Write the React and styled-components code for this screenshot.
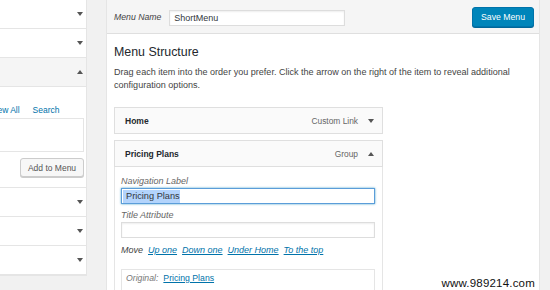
import React from 'react';
import styled, { createGlobalStyle } from 'styled-components';

const GlobalStyle = createGlobalStyle`
    body {
        margin: 0;
        background: #f1f1f1;
        font-family: "Liberation Sans", Arial, sans-serif;
        color: #444;
    }
`

const Arrow = ({ up }) => <Tri $up={up} />

const App = () => {
    return (
        <Page>
            <GlobalStyle />
            <Sidebar>
                <AccRow><Arrow /></AccRow>
                <AccRow><Arrow /></AccRow>
                <AccRow $open><Arrow up /></AccRow>
                <AccBody>
                    <Tabs>
                        <TabLink>View All</TabLink>
                        <TabLink>Search</TabLink>
                    </Tabs>
                    <ListBox />
                    <ButtonRow>
                        <AddButton>Add to Menu</AddButton>
                    </ButtonRow>
                </AccBody>
                <AccRow><Arrow /></AccRow>
                <AccRow><Arrow /></AccRow>
                <AccRow><Arrow /></AccRow>
            </Sidebar>

            <Editor>
                <EditorHeader>
                    <NameLabel>Menu Name</NameLabel>
                    <NameInput>ShortMenu</NameInput>
                    <SaveButton>Save Menu</SaveButton>
                </EditorHeader>
                <EditorBody>
                    <Heading>Menu Structure</Heading>
                    <Description>
                        Drag each item into the order you prefer. Click the arrow on the right of the item to reveal additional configuration options.
                    </Description>

                    <ItemHandle>
                        <ItemTitle>Home</ItemTitle>
                        <ItemType>Custom Link</ItemType>
                        <Arrow />
                    </ItemHandle>

                    <ItemHandle $spaced>
                        <ItemTitle>Pricing Plans</ItemTitle>
                        <ItemType>Group</ItemType>
                        <Arrow up />
                    </ItemHandle>
                    <ItemSettings>
                        <FieldLabel>Navigation Label</FieldLabel>
                        <TextField $focused>
                            <Selected>Pricing Plans</Selected>
                        </TextField>
                        <FieldLabel>Title Attribute</FieldLabel>
                        <TextField />
                        <MoveRow>
                            <MoveLabel>Move</MoveLabel>
                            <MoveLink>Up one</MoveLink>
                            <MoveLink>Down one</MoveLink>
                            <MoveLink>Under Home</MoveLink>
                            <MoveLink>To the top</MoveLink>
                        </MoveRow>
                        <OriginalBox>
                            <OriginalLabel>Original:</OriginalLabel>
                            <OriginalLink>Pricing Plans</OriginalLink>
                        </OriginalBox>
                    </ItemSettings>
                </EditorBody>
            </Editor>
            <Watermark>www.989214.com</Watermark>
        </Page>
    );
}

const Page = styled.div`
    position: relative;
    display: flex;
    align-items: flex-start;
    gap: 19px;
    height: 290px;
    overflow: hidden;
`

const Tri = styled.span`
    width: 0;
    height: 0;
    border-left: 3px solid transparent;
    border-right: 3px solid transparent;
    ${p => p.$up ? 'border-bottom: 4px solid #555;' : 'border-top: 4px solid #555;'}
`

const Sidebar = styled.div`
    flex: 0 0 87px;
    box-sizing: border-box;
    background: #fff;
    border: 1px solid #e5e5e5;
    border-left: 0;
    border-top: 0;
    overflow: hidden;
`

const AccRow = styled.div`
    height: 28px;
    display: flex;
    align-items: center;
    justify-content: flex-end;
    padding-right: 3px;
    background: ${p => p.$open ? '#f5f5f5' : '#fff'};
    border-bottom: 1px solid #e5e5e5;
`

const AccBody = styled.div`
    padding: 18px 2px 10px 0;
    border-bottom: 1px solid #e5e5e5;
`

const Tabs = styled.div`
    display: flex;
    gap: 13px;
    margin-left: -10px;
    line-height: 10px;
`

const TabLink = styled.span`
    font-size: 8.5px;
    color: #0073aa;
    white-space: nowrap;
`

const ListBox = styled.div`
    height: 32px;
    margin: 3px 0 0 -5px;
    border: 1px solid #e5e5e5;
`

const ButtonRow = styled.div`
    display: flex;
    justify-content: flex-end;
    margin-top: 6px;
`

const AddButton = styled.div`
    box-sizing: border-box;
    width: 64px;
    height: 19px;
    display: flex;
    align-items: center;
    justify-content: center;
    font-size: 8.5px;
    color: #555;
    background: #f7f7f7;
    border: 1px solid #ccc;
    border-radius: 3px;
    box-shadow: 0 1px 0 #ccc;
    white-space: nowrap;
`

const Editor = styled.div`
    flex: 0 0 434px;
    box-sizing: border-box;
    background: #fff;
    border: 1px solid #e5e5e5;
    border-top: 0;
    min-height: 320px;
`

const EditorHeader = styled.div`
    height: 33px;
    display: flex;
    align-items: center;
    padding: 0 5px 0 7px;
    background: #f5f5f5;
    border-bottom: 1px solid #dfdfdf;
`

const NameLabel = styled.span`
    font-size: 8.7px;
    font-style: italic;
    color: #444;
    margin-right: 8px;
`

const NameInput = styled.div`
    box-sizing: border-box;
    width: 176px;
    height: 16px;
    margin-top: 2px;
    padding-left: 4px;
    display: flex;
    align-items: center;
    font-size: 9px;
    color: #32373c;
    background: #fff;
    border: 1px solid #ddd;
    box-shadow: inset 0 1px 2px rgba(0, 0, 0, 0.07);
`

const SaveButton = styled.div`
    box-sizing: border-box;
    margin-left: auto;
    width: 62px;
    height: 20px;
    display: flex;
    align-items: center;
    justify-content: center;
    font-size: 8.7px;
    color: #fff;
    background: #0085ba;
    border: 1px solid #0073aa;
    border-radius: 3px;
    box-shadow: 0 1px 0 #006799;
`

const EditorBody = styled.div`
    padding: 11px 7px 0 7px;
`

const Heading = styled.h3`
    margin: 0;
    font-size: 12.4px;
    line-height: 15px;
    font-weight: normal;
    color: #23282d;
`

const Description = styled.p`
    margin: 6px 0 0;
    font-size: 9.05px;
    line-height: 13px;
    color: #444;
`

const ItemHandle = styled.div`
    box-sizing: border-box;
    width: 269px;
    height: 27px;
    margin-top: ${p => p.$spaced ? '6px' : '15px'};
    padding: 0 8px 0 10px;
    display: flex;
    align-items: center;
    background: #fafafa;
    border: 1px solid #dfdfdf;
`

const ItemTitle = styled.span`
    font-size: 8.5px;
    font-weight: bold;
    color: #23282d;
`

const ItemType = styled.span`
    margin-left: auto;
    margin-right: 10px;
    font-size: 8.4px;
    color: #666;
`

const ItemSettings = styled.div`
    box-sizing: border-box;
    width: 269px;
    padding: 8px 7px 0 6px;
    border: 1px solid #e5e5e5;
    border-top: 0;
    height: 140px;
`

const FieldLabel = styled.div`
    font-size: 9px;
    line-height: 12px;
    font-style: italic;
    color: #666;
    & + div { margin-top: 1px; }
`

const TextField = styled.div`
    box-sizing: border-box;
    height: 16px;
    margin-bottom: 5px;
    padding-left: 1px;
    display: flex;
    align-items: center;
    font-size: 9.2px;
    color: #32373c;
    background: #fff;
    border: 1px solid ${p => p.$focused ? '#5b9dd9' : '#ddd'};
    box-shadow: ${p => p.$focused ? '0 0 2px rgba(30, 140, 190, 0.8)' : 'inset 0 1px 2px rgba(0, 0, 0, 0.07)'};
`

const Selected = styled.span`
    background: #b3d4fc;
    padding: 1px 0 1px 3px;
    line-height: 11px;
`

const MoveRow = styled.div`
    display: flex;
    gap: 5px;
    margin-top: 6px;
    font-size: 9px;
    line-height: 12px;
    font-style: italic;
`

const MoveLabel = styled.span`
    color: #444;
`

const MoveLink = styled.span`
    color: #0073aa;
    text-decoration: underline;
`

const OriginalBox = styled.div`
    margin-top: 13px;
    height: 30px;
    padding: 2px 4px;
    border: 1px solid #e5e5e5;
    font-size: 8.7px;
    line-height: 12px;
`

const OriginalLabel = styled.span`
    font-style: italic;
    color: #777;
    margin-right: 5px;
`

const OriginalLink = styled.span`
    color: #0073aa;
    text-decoration: underline;
`

const Watermark = styled.div`
    position: absolute;
    right: 15px;
    bottom: 1px;
    font-size: 11.5px;
    color: #111;
    letter-spacing: 0.2px;
`

export default App;
